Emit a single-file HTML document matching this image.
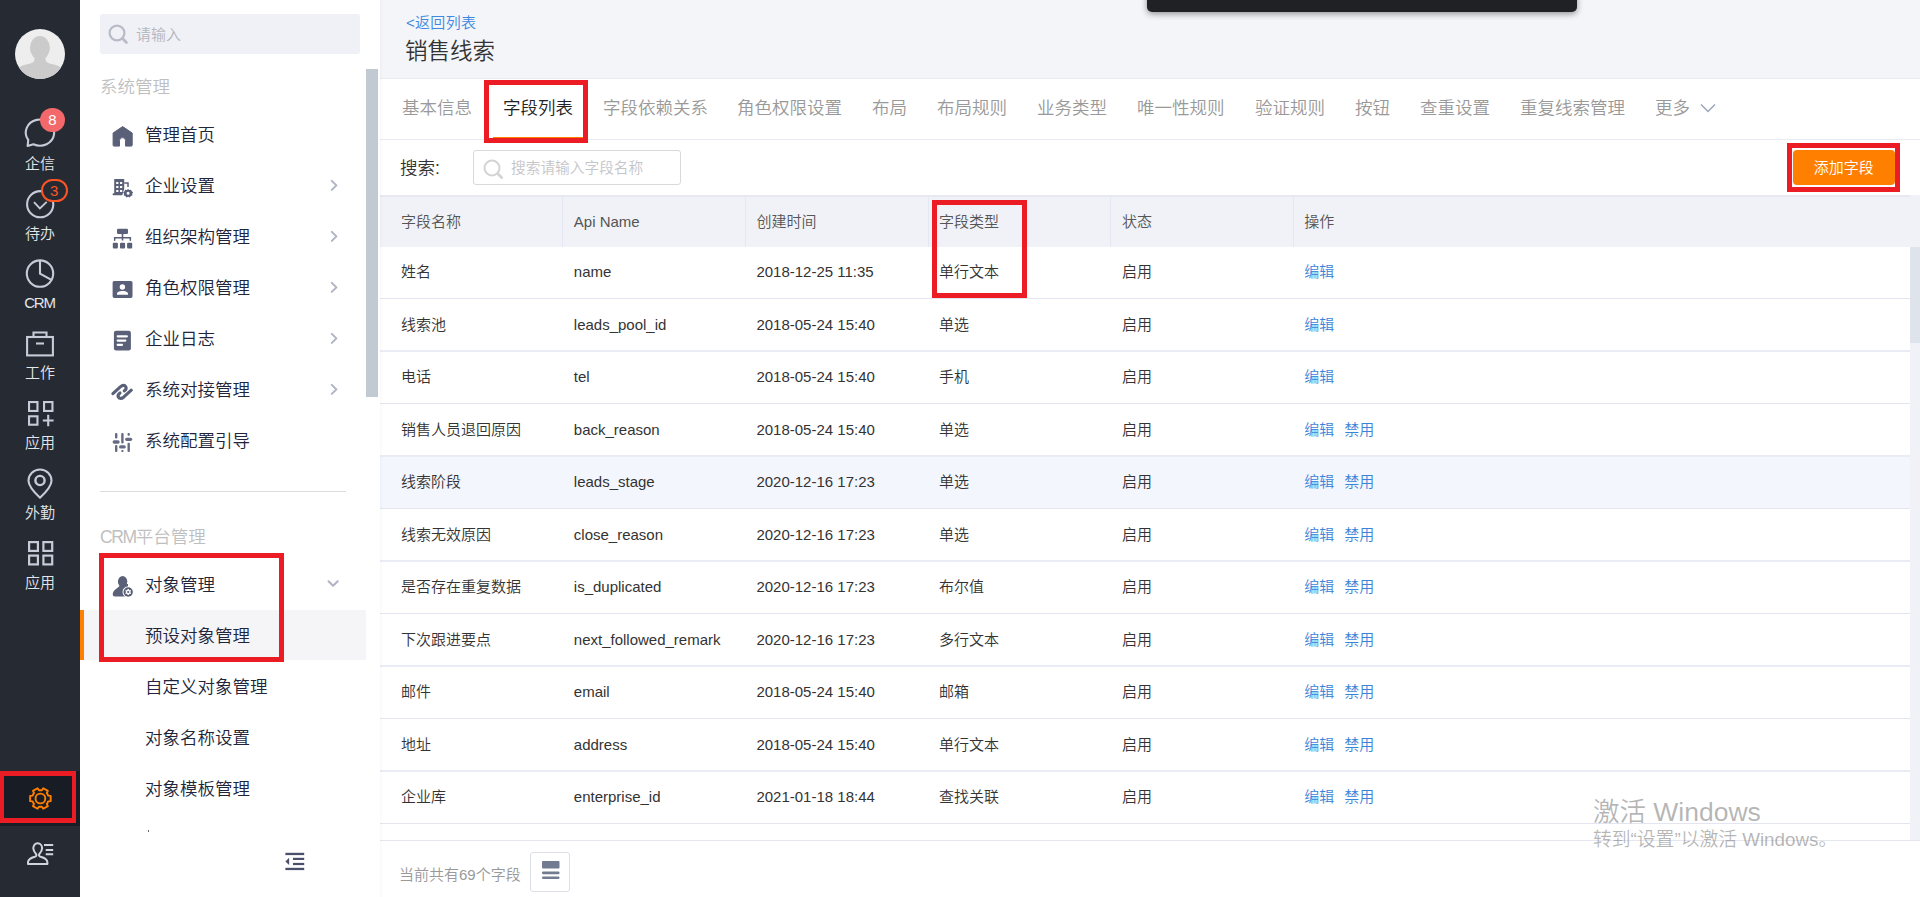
<!DOCTYPE html>
<html lang="zh-CN">
<head>
<meta charset="utf-8">
<title>销售线索 - 字段列表</title>
<style>
*{box-sizing:border-box;margin:0;padding:0}
html,body{width:1920px;height:897px;overflow:hidden;background:#fff}
body{font-family:"Liberation Sans","Noto Sans CJK SC",sans-serif;color:#333;position:relative;font-weight:350}
.abs{position:absolute}
/* ---------- dark rail ---------- */
#rail{position:absolute;left:0;top:0;width:80px;height:897px;background:#262a33}
#rail .avatar{position:absolute;left:15px;top:29px;width:50px;height:50px;border-radius:50%;background:#eeeeee;overflow:hidden}
#rail .it{position:absolute;left:0;width:80px;text-align:center;color:#e4e6ea;font-size:15px;line-height:20px}
#rail svg{position:absolute;overflow:visible}
.badge8{position:absolute;left:40px;top:108px;width:25px;height:24px;border-radius:12px;background:#f3696b;color:#fff;font-size:15px;line-height:24px;text-align:center}
.badge3{position:absolute;left:40.700px;top:178.600px;width:27.200px;height:23.200px;border-radius:11.600px;border:2.200px solid #fb5526;background:#262a33;color:#fb5526;font-size:15px;line-height:19px;text-align:center}
#gearbg{position:absolute;left:0;top:771px;width:80px;height:55px;background:#181c25}
.redbox{position:absolute;border:5px solid #ec1c24;z-index:20}
/* ---------- menu panel ---------- */
#menu{position:absolute;left:80px;top:0;width:300px;height:897px;background:#fff}
#menu .search{position:absolute;left:20px;top:14px;width:260px;height:40px;border-radius:3px;background:#f0f1f7}
#menu .search span{position:absolute;left:36px;top:1px;line-height:40px;font-size:15px;color:#b4b6bf}
#menu .sec{position:absolute;left:20px;font-size:17.5px;color:#bfbfbf;line-height:24px}
#menu .mi{position:absolute;left:65px;font-size:17.5px;color:#22253a;line-height:24px;white-space:nowrap}
#menu .ico{position:absolute;left:30px;overflow:visible}
#menu .arr{position:absolute;left:249px}
#menu .scroll{position:absolute;left:286px;top:69px;width:12px;height:328px;background:#c1c9d3}
#menu .divider{position:absolute;left:20px;top:491px;width:246px;height:1px;background:#dcdcdc}
#menu .active{position:absolute;left:0;top:609.700px;width:286px;height:50.700px;background:#f5f5f8}
#menu .active i{position:absolute;left:0;top:0;width:4px;height:50.700px;background:#ff8000}
/* ---------- main ---------- */
#main{position:absolute;left:380px;top:0;width:1540px;height:897px;background:#fff}
#head{position:absolute;left:0;top:0;width:1540px;height:79px;background:#f4f5f9;border-bottom:1px solid #e9ebf2}
#head .back{position:absolute;left:26px;top:13px;font-size:15px;line-height:20px;color:#3d88e2;letter-spacing:.3px}
#head .title{position:absolute;left:25px;top:35.500px;font-size:22.5px;line-height:32px;color:#333}
#tabs{position:absolute;left:0;top:79px;width:1540px;height:61px;border-bottom:1px solid #e9ebf2;background:#fff}
#tabs span{position:absolute;top:17px;font-size:17.5px;line-height:24px;color:#999;white-space:nowrap}
#tabs span.on{color:#222}
#tabs .ul{position:absolute;left:113px;top:58px;width:90px;height:2px;background:#ff8000}
#sbar{position:absolute;left:0;top:140px;width:1540px;height:56px}
#sbar .lbl{position:absolute;left:20px;top:16px;font-size:17.5px;line-height:24px;color:#333}
#sbar .inp{position:absolute;left:93px;top:10px;width:208px;height:35px;border:1px solid #d9d9d9;border-radius:3px;background:#fff}
#sbar .inp span{position:absolute;left:37px;top:0;line-height:35.500px;font-size:14.700px;color:#c5c5c8;white-space:nowrap}
#sbar .btn{position:absolute;left:1413px;top:10px;width:101.600px;height:35px;border-radius:4px;background:#ff8000;color:#fff;font-size:15px;line-height:35px;text-align:center}
#thead{position:absolute;left:0;top:195px;width:1540px;height:52px;background:#f0f2f7;border-top:2px solid #e6e9f2}
#thead span{position:absolute;top:14px;font-size:15px;line-height:22px;color:#555}
#thead i{position:absolute;top:0;width:1px;height:50px;background:#e4e8f3}
.row{position:absolute;left:0;width:1530px;background:#fff}
.bd1{position:absolute;left:0;width:1530px;height:1px;background:#e3e6f0}
.bd2{position:absolute;left:0;width:1530px;height:2px;background:#e9ecf4}
.row.hov{background:#f3f6fd}
.row span{position:absolute;top:14px;font-size:15px;line-height:22px;color:#333;white-space:nowrap}
.row span.a{color:#3a84d8}
#vscroll{position:absolute;left:1530px;top:195px;width:10px;height:645px;background:#f0f2f7}
#vscroll i{position:absolute;left:0;top:52px;width:10px;height:96px;background:#dfe3ec}
#foot{position:absolute;left:0;top:840px;width:1540px;height:57px;background:#fff;border-top:1px solid #e4e7f0}
#foot .t{position:absolute;left:19px;top:23px;font-size:15px;line-height:22px;color:#999}
#foot .b{position:absolute;left:150px;top:11px;width:40px;height:40px;border:1px solid #dcdfe6;border-radius:3px;background:#fff}
#tip{position:absolute;left:1147px;top:-10px;width:430px;height:22px;background:#202124;border-radius:5px;box-shadow:0 2px 6px rgba(0,0,0,.4);z-index:30}
#wm{position:absolute;left:1593px;top:795px;color:rgba(125,125,125,.56);z-index:25;white-space:nowrap}
#wm .a{font-size:26.5px;line-height:34px}
#wm .b{font-size:18.8px;line-height:24px;margin-top:-1px}

#lsh{position:absolute;left:0;top:0;width:3px;height:897px;background:linear-gradient(to right,rgba(0,0,0,.024),rgba(0,0,0,0));z-index:15}
</style>
</head>
<body>
<div id="rail">
  <div class="avatar">
    <svg style="left:0;top:0" width="50" height="50" viewBox="0 0 50 50"><ellipse cx="24.900" cy="18.800" rx="10" ry="11.800" fill="#cbcbcb"/><path d="M19.500 26V30.500C19.500 32.800 17 34.300 12 35.300C8 36.100 4.500 37.500 2 40.500V50H48V40.500C45.500 37.500 42 36.100 38 35.300C33 34.300 30.500 32.800 30.500 30.500V26Z" fill="#cbcbcb"/></svg>
  </div>
  <!-- 企信 -->
  <svg style="left:24px;top:117px" width="32" height="32" viewBox="0 0 32 32" fill="none" stroke="#c6cbd8" stroke-width="2.100"><path d="M4.270 23A14.200 13.100 0 1 1 9.400 27.200L3.600 28.900Z" stroke-linejoin="round"/></svg>
  <div class="badge8">8</div>
  <div class="it" style="top:153.500px">企信</div>
  <!-- 待办 -->
  <svg style="left:25.900px;top:189.600px" width="29" height="29" viewBox="0 0 29 29" fill="none" stroke="#c6cbd8" stroke-width="2.100"><circle cx="14.200" cy="14.200" r="13.100"/><path d="M8 12.200L13.900 18.400L20.700 11.900" stroke-linejoin="miter" stroke-width="1.900"/></svg>
  <div class="badge3">3</div>
  <div class="it" style="top:223.500px">待办</div>
  <!-- CRM -->
  <svg style="left:26px;top:260px" width="28" height="28" viewBox="0 0 28 28" fill="none" stroke="#c6cbd8" stroke-width="2.100"><circle cx="14" cy="13.600" r="13.200"/><path d="M14 0.800V13.600l11 6"/></svg>
  <div class="it" style="top:293px;letter-spacing:-1.200px;text-indent:-1px">CRM</div>
  <!-- 工作 -->
  <svg style="left:26px;top:331px" width="28" height="26" viewBox="0 0 28 26" fill="none" stroke="#c6cbd8" stroke-width="2.100"><rect x="1.100" y="6" width="25.800" height="18.400"/><path d="M7.500 6V1.500h13V6"/><path d="M10 12.500h8"/></svg>
  <div class="it" style="top:362.500px">工作</div>
  <!-- 应用+ -->
  <svg style="left:27.600px;top:401px" width="26" height="26" viewBox="0 0 26 26" fill="none" stroke="#c6cbd8" stroke-width="2.100"><rect x="1.050" y="1.050" width="8.400" height="8.900"/><rect x="16.050" y="1.050" width="8.400" height="8.900"/><rect x="1.050" y="15.300" width="8.400" height="8.400"/><path d="M20.200 13.800v11.400M14.800 19.500h10.800"/></svg>
  <div class="it" style="top:432.500px">应用</div>
  <!-- 外勤 -->
  <svg style="left:27px;top:468px" width="26" height="32" viewBox="0 0 26 32" fill="none" stroke="#c6cbd8" stroke-width="2.100"><path d="M13 1.500c6.400 0 11.500 4.900 11.500 11.200c0 5.800-6.500 12.300-11.500 17c-5-4.700-11.500-11.200-11.500-17C1.500 6.400 6.600 1.500 13 1.500z" stroke-linejoin="round"/><circle cx="13" cy="12.500" r="4.600" stroke-width="2.400"/></svg>
  <div class="it" style="top:502.500px">外勤</div>
  <!-- 应用 -->
  <svg style="left:27.600px;top:541px" width="26" height="26" viewBox="0 0 26 26" fill="none" stroke="#c6cbd8" stroke-width="2.200"><rect x="1.100" y="1.100" width="8.800" height="8.800"/><rect x="15.400" y="1.100" width="8.800" height="8.800"/><rect x="1.100" y="14.600" width="8.800" height="8.800"/><rect x="15.400" y="14.600" width="8.800" height="8.800"/></svg>
  <div class="it" style="top:572.500px">应用</div>
  <div id="gearbg"></div>
  <!-- gear -->
  <svg style="left:28px;top:786px" width="25" height="25" viewBox="0 0 25 25" fill="none" stroke="#ff8000" stroke-width="1.900" stroke-linejoin="round"><path d="M20.20 9.66L22.66 9.85L22.66 15.15L20.20 15.34A8.3 8.3 0 0 1 18.76 17.84L19.83 20.06L15.23 22.71L13.84 20.67A8.3 8.3 0 0 1 10.96 20.67L9.57 22.71L4.97 20.06L6.04 17.84A8.3 8.3 0 0 1 4.60 15.34L2.14 15.15L2.14 9.85L4.60 9.66A8.3 8.3 0 0 1 6.04 7.16L4.97 4.94L9.57 2.29L10.96 4.33A8.3 8.3 0 0 1 13.84 4.33L15.23 2.29L19.83 4.94L18.76 7.16A8.3 8.3 0 0 1 20.20 9.66Z"/><circle cx="12.4" cy="12.5" r="4.900"/></svg>
  <!-- user list -->
  <svg style="left:26px;top:842px" width="28" height="24" viewBox="0 0 28 24" fill="none" stroke="#d0d4dd" stroke-width="2"><path d="M11.550 1.300C14.500 1.300 16.100 3.600 16.100 6.300C16.100 9 14.500 10.800 13.200 12.200C12.600 13.200 13 14.300 14.500 14.800C18.500 16 21.400 17 21.400 20.300V22.100H2V20.300C2 17 4.900 16 8.900 14.800C10.400 14.300 10.800 13.200 10.200 12.200C8.900 10.800 7.300 9 7.300 6.300C7.300 3.600 8.900 1.300 11.550 1.300Z" stroke-linejoin="round"/><path d="M18 3.050h9.200M19.700 7.950h7.500M19.700 12.250h7.500"/></svg>
  <div class="redbox" style="left:0;top:771px;width:76px;height:52px;border-width:5px 4.500px 5px 4px"></div>
</div>
<div id="menu">
  <div class="search">
    <svg class="abs" style="left:8px;top:10px" width="20" height="20" viewBox="0 0 20 20" fill="none" stroke="#b9bbc6" stroke-width="2.300"><circle cx="9" cy="9" r="7.400"/><path d="M14.600 14.600l3.800 3.800" stroke-linecap="round" stroke-width="2.800"/></svg>
    <span>请输入</span>
  </div>
  <div class="scroll"></div>
  <div class="sec" style="top:75px">系统管理</div>

  <svg class="ico" style="top:124px" width="26" height="26" viewBox="0 0 26 26"><path d="M12.650 2.600L22.200 9V21.100a1 1 0 0 1-1 1H15.500V16.600a3 3 0 0 0-6 0V22.100H4.100a1 1 0 0 1-1-1V9z" fill="#5a6078" stroke="#5a6078" stroke-width="1" stroke-linejoin="round"/></svg>
  <div class="mi" style="top:123px">管理首页</div>

  <svg class="ico" style="top:172px" width="26" height="26" viewBox="0 0 26 26" fill="#5a6078"><path d="M4.200 6.900h10v15h-10zM6.200 10v1.900h2.200V10zM10 10v1.900h2.200V10zM6.200 14v1.900h2.200V14zM10 14v1.900h2.200V14zM6.200 18v2h2.200v-2zM10 18v2h2.200v-2z" fill-rule="evenodd"/><rect x="2.600" y="21.200" width="10" height="2" rx=".8"/><path d="M14.200 10.900H18V15" fill="none" stroke="#5a6078" stroke-width="1.500"/><circle cx="18.100" cy="21.200" r="5.300" fill="#fff"/><path d="M18.100 17l1.300 1 1.700-.3.600 1.600 1.400 1-.9 1.500.2 1.700-1.600.5-1 1.400-1.700-.7-1.700.7-1-1.400-1.600-.5.200-1.700-.9-1.500 1.400-1 .6-1.600 1.700.3zM18.100 19.700a1.500 1.500 0 1 0 0 3a1.500 1.500 0 0 0 0-3z" fill-rule="evenodd"/></svg>
  <div class="mi" style="top:174px">企业设置</div>
  <svg class="arr" style="top:179px" width="10" height="13" viewBox="0 0 10 13" fill="none" stroke="#b0b4c3" stroke-width="2" stroke-linecap="round" stroke-linejoin="round"><path d="M2.800 1.900L7.400 6.400L2.800 10.900"/></svg>

  <svg class="ico" style="top:224px" width="26" height="26" viewBox="0 0 26 26" fill="#5a6078"><rect x="7" y="4.700" width="11" height="5.200" rx="1.200"/><rect x="11.700" y="9.500" width="1.600" height="7"/><rect x="3.900" y="13" width="17.200" height="1.500" rx=".7"/><rect x="3.900" y="13" width="1.500" height="3.900" rx=".7"/><rect x="19.600" y="13" width="1.500" height="3.900" rx=".7"/><rect x="2.800" y="18.800" width="5.100" height="5.600" rx="1"/><rect x="10" y="18.800" width="5.100" height="5.600" rx="1"/><rect x="17.100" y="18.800" width="5.100" height="5.600" rx="1"/></svg>
  <div class="mi" style="top:225px">组织架构管理</div>
  <svg class="arr" style="top:230px" width="10" height="13" viewBox="0 0 10 13" fill="none" stroke="#b0b4c3" stroke-width="2" stroke-linecap="round" stroke-linejoin="round"><path d="M2.800 1.900L7.400 6.400L2.800 10.900"/></svg>

  <svg class="ico" style="top:276px" width="26" height="26" viewBox="0 0 26 26" fill="#5a6078"><path d="M4.200 4.900h16.700a1.600 1.600 0 0 1 1.600 1.600v13.800a1.600 1.600 0 0 1-1.600 1.600H4.200a1.600 1.600 0 0 1-1.600-1.600V6.500a1.600 1.600 0 0 1 1.600-1.600zM12.400 8.300a2.700 2.700 0 1 0 0 5.400a2.700 2.700 0 0 0 0-5.400zM7 18.800h11v-1.300c0-1.700-3-2.600-5.500-2.600s-5.500.9-5.500 2.600z" fill-rule="evenodd"/></svg>
  <div class="mi" style="top:276px">角色权限管理</div>
  <svg class="arr" style="top:281px" width="10" height="13" viewBox="0 0 10 13" fill="none" stroke="#b0b4c3" stroke-width="2" stroke-linecap="round" stroke-linejoin="round"><path d="M2.800 1.900L7.400 6.400L2.800 10.900"/></svg>

  <svg class="ico" style="top:328px" width="26" height="26" viewBox="0 0 26 26" fill="#5a6078"><rect x="3.900" y="2.700" width="17" height="19.700" rx="2.200"/><rect x="6.600" y="7.200" width="11.400" height="2.200" rx="1.100" fill="#fff"/><rect x="6.600" y="11.400" width="9.800" height="2.300" rx="1.100" fill="#fff"/><rect x="6.600" y="15.700" width="6.500" height="2.200" rx="1.100" fill="#fff"/></svg>
  <div class="mi" style="top:327px">企业日志</div>
  <svg class="arr" style="top:332px" width="10" height="13" viewBox="0 0 10 13" fill="none" stroke="#b0b4c3" stroke-width="2" stroke-linecap="round" stroke-linejoin="round"><path d="M2.800 1.900L7.400 6.400L2.800 10.900"/></svg>

  <svg class="ico" style="top:376px" width="26" height="26" viewBox="0 0 26 26" fill="none" stroke="#5a6078" stroke-width="3.100" stroke-linecap="round" stroke-linejoin="round"><path d="M2.900 17.600L10.600 10.600C12.600 8.900 14.800 9.100 15.800 10.700C16.700 12.200 16.100 13.500 14.200 14.900"/><path d="M21.300 14.200L13.600 21.200C11.600 22.900 9.400 22.700 8.400 21.100C7.500 19.600 8.100 18.300 10 16.900"/></svg>
  <div class="mi" style="top:378px">系统对接管理</div>
  <svg class="arr" style="top:383px" width="10" height="13" viewBox="0 0 10 13" fill="none" stroke="#b0b4c3" stroke-width="2" stroke-linecap="round" stroke-linejoin="round"><path d="M2.800 1.900L7.400 6.400L2.800 10.900"/></svg>

  <svg class="ico" style="top:428px" width="26" height="26" viewBox="0 0 26 26" fill="#666b83"><rect x="5" y="4.900" width="2.400" height="5.600" rx="1"/><rect x="2.600" y="12.300" width="7.100" height="3.400" rx="1.700"/><rect x="5" y="17" width="2.400" height="6.900" rx="1"/><rect x="11.200" y="4.900" width="2.400" height="10.500" rx="1"/><rect x="9" y="17.200" width="6.800" height="3.400" rx="1.700"/><rect x="11.200" y="22.100" width="2.400" height="1.800" rx=".9"/><rect x="17.500" y="4.900" width="2.400" height="2.900" rx="1"/><rect x="15.100" y="9.700" width="7.100" height="3.300" rx="1.650"/><rect x="17.500" y="14.800" width="2.400" height="9.100" rx="1"/></svg>
  <div class="mi" style="top:429px">系统配置引导</div>

  <div class="divider"></div>
  <div class="sec" style="top:525px"><span style="letter-spacing:-1.400px">CRM</span>平台管理</div>

  <svg class="ico" style="top:572px" width="26" height="28" viewBox="0 0 26 28" fill="#5a6078"><path d="M9.800 12.500C9.800 16.200 4 16.300 2.800 21.500C2.400 23.500 3.500 24.500 5 24.500H18V12z"/><ellipse cx="12.600" cy="9.500" rx="4.700" ry="5.400"/><circle cx="18.200" cy="20" r="5.700" fill="#fff"/><circle cx="18.200" cy="20" r="4.700"/><path d="M20.28 20.29L21.16 20.91L20.47 22.11L19.49 21.65L18.99 21.95L18.90 23.02L17.50 23.02L17.41 21.95L16.91 21.65L15.93 22.11L15.24 20.91L16.12 20.29L16.12 19.71L15.24 19.09L15.93 17.89L16.91 18.35L17.41 18.05L17.50 16.98L18.90 16.98L18.99 18.05L19.49 18.35L20.47 17.89L21.16 19.09L20.28 19.71Z" fill="#fff"/><circle cx="18.200" cy="20" r="1.100"/></svg>
  <div class="mi" style="top:573px">对象管理</div>
  <svg class="abs" style="left:247px;top:579px" width="14" height="10" viewBox="0 0 14 10" fill="none" stroke="#b0b4c3" stroke-width="2" stroke-linecap="round" stroke-linejoin="round"><path d="M1.500 2.200l4.600 4.600 4.600-4.600"/></svg>

  <div class="active"><i></i></div>
  <div class="mi" style="top:624px">预设对象管理</div>
  <div class="mi" style="top:675px">自定义对象管理</div>
  <div class="mi" style="top:726px">对象名称设置</div>
  <div class="mi" style="top:777px">对象模板管理</div>
  <div class="abs" style="left:67.500px;top:830px;width:1.500px;height:1.500px;background:#666"></div>

  <svg class="abs" style="left:205px;top:852px" width="20" height="19" viewBox="0 0 20 19" fill="#4a4f6a"><rect x="0.400" y="0.800" width="18.800" height="2.300"/><rect x="8" y="5.800" width="11.200" height="2.200"/><rect x="8" y="10.900" width="11.200" height="2.200"/><rect x="0.400" y="15.800" width="18.800" height="2.300"/><path d="M4.100 5.800v7.300L0.400 9.450z"/></svg>

  <div class="redbox" style="left:19px;top:553.200px;width:185px;height:108.400px"></div>
</div>
<div id="main">
  <div id="head"><div class="back">&lt;返回列表</div><div class="title">销售线索</div></div>
  <div id="tabs"><span style="left:22px">基本信息</span><span class="on" style="left:123px">字段列表</span><span style="left:223px">字段依赖关系</span><span style="left:357px">角色权限设置</span><span style="left:492px">布局</span><span style="left:557px">布局规则</span><span style="left:657px">业务类型</span><span style="left:757px">唯一性规则</span><span style="left:875px">验证规则</span><span style="left:975px">按钮</span><span style="left:1040px">查重设置</span><span style="left:1140px">重复线索管理</span><span style="left:1275px">更多</span><div class="ul"></div><svg class="abs" style="left:1320px;top:24px" width="16" height="10" viewBox="0 0 16 10" fill="none" stroke="#9ba6b8" stroke-width="1.500"><path d="M1 1.500l7 7 7-7"/></svg></div>
  <div id="sbar"><div class="lbl">搜索:</div><div class="inp"><svg class="abs" style="left:9px;top:8px" width="20" height="20" viewBox="0 0 20 20" fill="none" stroke="#d4d4d6" stroke-width="2"><circle cx="9" cy="9" r="7.500"/><path d="M14.800 14.800l3.800 3.800" stroke-linecap="round" stroke-width="2.800"/></svg><span>搜索请输入字段名称</span></div><div class="btn">添加字段</div></div>
  <div id="thead"><span style="left:21px">字段名称</span><span style="left:193.79999999999995px">Api Name</span><i style="left:182px"></i><span style="left:376.4px">创建时间</span><i style="left:365px"></i><span style="left:559px">字段类型</span><i style="left:548px"></i><span style="left:742px">状态</span><i style="left:730px"></i><span style="left:924.3px">操作</span><i style="left:913px"></i></div>
  <div id="rows">
<div class="row" style="top:247px;height:52px"><span style="left:21px;top:14px">姓名</span><span style="left:193.79999999999995px;top:14px">name</span><span style="left:376.4px;top:14px">2018-12-25 11:35</span><span style="left:559px;top:14px">单行文本</span><span style="left:742px;top:14px">启用</span><span class="a" style="left:924.3px;top:14px">编辑</span></div>
<div class="bd1" style="top:298px"></div>
<div class="row" style="top:299px;height:53px"><span style="left:21px;top:15px">线索池</span><span style="left:193.79999999999995px;top:15px">leads_pool_id</span><span style="left:376.4px;top:15px">2018-05-24 15:40</span><span style="left:559px;top:15px">单选</span><span style="left:742px;top:15px">启用</span><span class="a" style="left:924.3px;top:15px">编辑</span></div>
<div class="bd2" style="top:350px"></div>
<div class="row" style="top:352px;height:52px"><span style="left:21px;top:14px">电话</span><span style="left:193.79999999999995px;top:14px">tel</span><span style="left:376.4px;top:14px">2018-05-24 15:40</span><span style="left:559px;top:14px">手机</span><span style="left:742px;top:14px">启用</span><span class="a" style="left:924.3px;top:14px">编辑</span></div>
<div class="bd1" style="top:403px"></div>
<div class="row" style="top:404px;height:53px"><span style="left:21px;top:15px">销售人员退回原因</span><span style="left:193.79999999999995px;top:15px">back_reason</span><span style="left:376.4px;top:15px">2018-05-24 15:40</span><span style="left:559px;top:15px">单选</span><span style="left:742px;top:15px">启用</span><span class="a" style="left:924.3px;top:15px">编辑</span><span class="a" style="left:964.3px;top:15px">禁用</span></div>
<div class="bd2" style="top:455px"></div>
<div class="row hov" style="top:457px;height:52px"><span style="left:21px;top:14px">线索阶段</span><span style="left:193.79999999999995px;top:14px">leads_stage</span><span style="left:376.4px;top:14px">2020-12-16 17:23</span><span style="left:559px;top:14px">单选</span><span style="left:742px;top:14px">启用</span><span class="a" style="left:924.3px;top:14px">编辑</span><span class="a" style="left:964.3px;top:14px">禁用</span></div>
<div class="bd1" style="top:508px"></div>
<div class="row" style="top:509px;height:53px"><span style="left:21px;top:15px">线索无效原因</span><span style="left:193.79999999999995px;top:15px">close_reason</span><span style="left:376.4px;top:15px">2020-12-16 17:23</span><span style="left:559px;top:15px">单选</span><span style="left:742px;top:15px">启用</span><span class="a" style="left:924.3px;top:15px">编辑</span><span class="a" style="left:964.3px;top:15px">禁用</span></div>
<div class="bd2" style="top:560px"></div>
<div class="row" style="top:562px;height:52px"><span style="left:21px;top:14px">是否存在重复数据</span><span style="left:193.79999999999995px;top:14px">is_duplicated</span><span style="left:376.4px;top:14px">2020-12-16 17:23</span><span style="left:559px;top:14px">布尔值</span><span style="left:742px;top:14px">启用</span><span class="a" style="left:924.3px;top:14px">编辑</span><span class="a" style="left:964.3px;top:14px">禁用</span></div>
<div class="bd1" style="top:613px"></div>
<div class="row" style="top:614px;height:53px"><span style="left:21px;top:15px">下次跟进要点</span><span style="left:193.79999999999995px;top:15px">next_followed_remark</span><span style="left:376.4px;top:15px">2020-12-16 17:23</span><span style="left:559px;top:15px">多行文本</span><span style="left:742px;top:15px">启用</span><span class="a" style="left:924.3px;top:15px">编辑</span><span class="a" style="left:964.3px;top:15px">禁用</span></div>
<div class="bd2" style="top:665px"></div>
<div class="row" style="top:667px;height:52px"><span style="left:21px;top:14px">邮件</span><span style="left:193.79999999999995px;top:14px">email</span><span style="left:376.4px;top:14px">2018-05-24 15:40</span><span style="left:559px;top:14px">邮箱</span><span style="left:742px;top:14px">启用</span><span class="a" style="left:924.3px;top:14px">编辑</span><span class="a" style="left:964.3px;top:14px">禁用</span></div>
<div class="bd1" style="top:718px"></div>
<div class="row" style="top:719px;height:53px"><span style="left:21px;top:15px">地址</span><span style="left:193.79999999999995px;top:15px">address</span><span style="left:376.4px;top:15px">2018-05-24 15:40</span><span style="left:559px;top:15px">单行文本</span><span style="left:742px;top:15px">启用</span><span class="a" style="left:924.3px;top:15px">编辑</span><span class="a" style="left:964.3px;top:15px">禁用</span></div>
<div class="bd2" style="top:770px"></div>
<div class="row" style="top:772px;height:52px"><span style="left:21px;top:14px">企业库</span><span style="left:193.79999999999995px;top:14px">enterprise_id</span><span style="left:376.4px;top:14px">2021-01-18 18:44</span><span style="left:559px;top:14px">查找关联</span><span style="left:742px;top:14px">启用</span><span class="a" style="left:924.3px;top:14px">编辑</span><span class="a" style="left:964.3px;top:14px">禁用</span></div>
<div class="bd1" style="top:823px"></div>
<div class="row" style="top:824px;height:16px"></div>
  </div>
  <div id="vscroll"><i></i></div>
  <div id="foot"><div class="t">当前共有69个字段</div><div class="b"><svg class="abs" style="left:10.700px;top:7.800px" width="18" height="19" viewBox="0 0 18 19" fill="#727b8f"><rect x="0" y="0" width="17.500" height="7.400" rx="1"/><rect x="0" y="10.400" width="17.500" height="2.900" rx="1.200"/><rect x="0" y="15.400" width="17.500" height="2.600" rx="1.200"/></svg></div></div>
  <div id="lsh"></div>
  <div class="redbox" style="left:104px;top:80px;width:103.700px;height:62.800px"></div>
  <div class="redbox" style="left:1407.100px;top:143px;width:112.800px;height:48.900px"></div>
  <div class="redbox" style="left:552.100px;top:200px;width:94.700px;height:97.700px"></div>
</div>
<div id="tip"></div>
<div id="wm"><div class="a">激活 Windows</div><div class="b">转到“设置”以激活 Windows。</div></div>
</body>
</html>
